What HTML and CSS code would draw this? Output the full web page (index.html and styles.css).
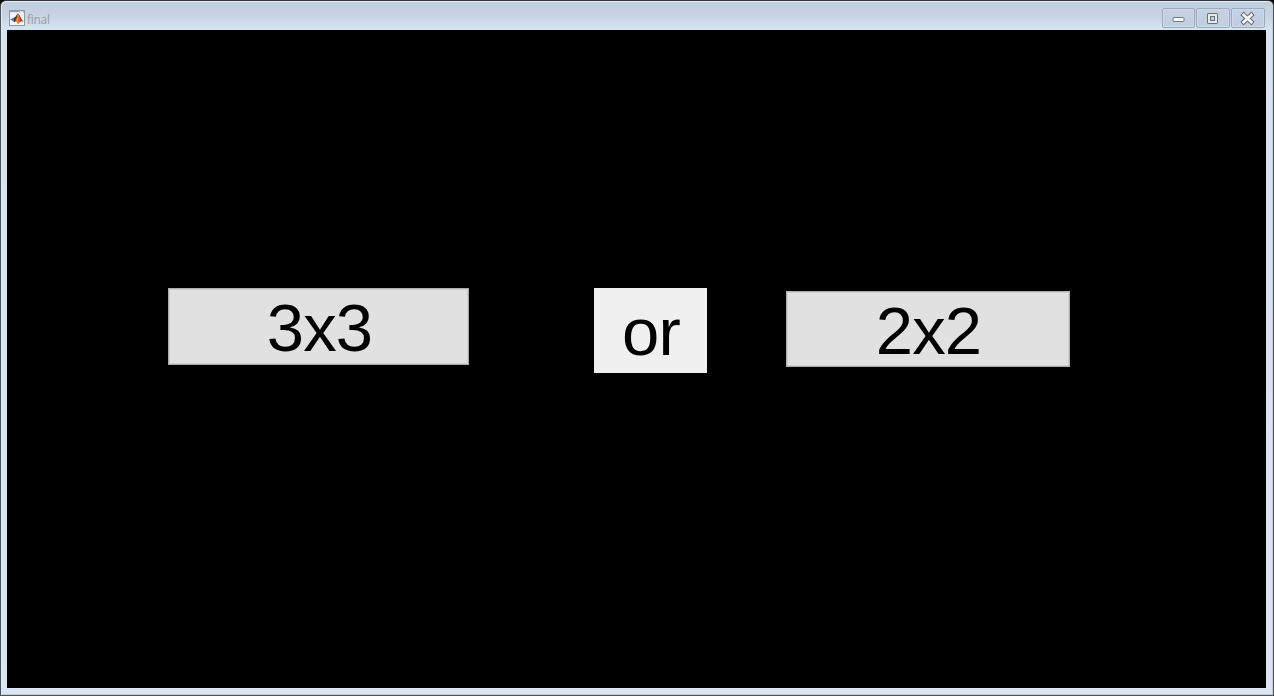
FILE: index.html
```html
<!DOCTYPE html>
<html lang="en">
<head>
<meta charset="utf-8">
<title>final</title>
<link rel="stylesheet" href="styles.css">
</head>
<body>
<div class="window">
  <header class="titlebar">
    <svg class="app-icon" width="16" height="16" viewBox="0 0 16 16">
      <rect x=".5" y=".5" width="15" height="15" fill="#f4f5f6" stroke="#8b98a8"/>
      <path d="M1 1.5h14" stroke="#8fa6c4" stroke-width="1.4"/>
      <path d="M11 1.5h3" stroke="#d5dfeb"/>
      <path d="M1 9.6 5 7.6 7 9.2 5 11.8Z" fill="#3d83b5"/>
      <path d="M5 7.6C7 7.4 7.5 4 9 3.2L8 8.6 5.8 12.2 5 11.8Z" fill="#4e3346"/>
      <path d="M9 3.2C10.8 4.5 11.8 9 14.5 11.8 12.5 10.6 11 12 9 14.2 8.3 12.4 7.2 11.5 5.8 12 7.7 9.8 8 5.5 9 3.2Z" fill="#e2602a"/>
      <path d="M9 4C9.7 6.5 9.4 10.5 8.5 12.6L7.2 11.4C8.7 9.1 8.7 6 9 4Z" fill="#f5a83c"/>
      <path d="M9.5 4C10.9 5.5 11.8 9 14.5 11.8 12.9 10.7 11.8 10.8 11 11.4 11.1 8.5 10.4 5.7 9.5 4Z" fill="#a8331f"/>
    </svg>
    <span class="title">final</span>
    <div class="controls">
      <button class="control" aria-label="Minimize">
        <svg width="13" height="11" viewBox="0 0 13 11"><rect x="1" y="4.5" width="11" height="4" rx="1" fill="#fff" stroke="#727985"/></svg>
      </button>
      <button class="control" aria-label="Maximize">
        <svg width="11" height="11" viewBox="0 0 11 11"><rect x=".5" y=".5" width="10" height="10" rx=".6" fill="#e6e9ed" stroke="#69707c"/><rect x="3.5" y="3.5" width="4" height="4" fill="#c1cfe0" stroke="#69707c"/></svg>
      </button>
      <button class="control" aria-label="Close">
        <svg width="13" height="11" viewBox="0 0 13 11"><path d="M2.7 2 10.3 9M10.3 2 2.7 9" stroke="#69707c" stroke-width="4.8" stroke-linecap="square" fill="none"/><path d="M2.7 2 10.3 9M10.3 2 2.7 9" stroke="#f7f8fa" stroke-width="2.7" stroke-linecap="square" fill="none"/></svg>
      </button>
    </div>
  </header>
  <main class="canvas">
    <button class="choice choice-three">3x3</button>
    <div class="label">or</div>
    <button class="choice choice-two">2x2</button>
  </main>
</div>
</body>
</html>
```
FILE: styles.css
```css
* { box-sizing: border-box; }
body { margin: 0; background: #000; overflow: hidden; }
.window {
  display: flex;
  flex-direction: column;
  width: 1274px;
  height: 696px;
  padding: 0 7px 7px 6px;
  border: 1px solid #4c5259;
  border-top-color: #2f3439;
  border-radius: 6px 6px 0 0;
  background: linear-gradient(#bfcddd 0, #c5d3e2 14px, #d6e3f1 28px, #d9e5f3 100%);
  box-shadow: inset 0 1px #e6edf5, inset 1px 0 #e1eaf3, inset -1px -1px #c5ced8;
}
.titlebar {
  display: flex;
  flex: none;
  height: 29px;
  padding-left: 2px;
}
.app-icon { margin-top: 9px; }
.title {
  margin: 11px 0 0 2px;
  font: 12px/16px "Open Sans", "Noto Sans", sans-serif;
  letter-spacing: -0.3px;
  color: #989ca1;
}
.controls { display: flex; gap: 1px; margin: 7px 1px 0 auto; }
.control {
  display: flex;
  align-items: center;
  justify-content: center;
  width: 34px;
  height: 20px;
  padding: 0 1px 0 0;
  border: 1px solid #9baabd;
  border-radius: 2px;
  background: linear-gradient(#c5d2e1, #c0cee0);
  box-shadow: inset 0 0 0 1px #cedae7;
}
.control:first-child { width: 33px; padding-right: 0; }
.control svg { display: block; overflow: visible; }
.canvas {
  display: flex;
  flex: 1;
  align-items: flex-start;
  padding: 258px 0 0 161px;
  background: #000;
}
.choice, .label {
  flex: none;
  font: 67px/74px "Liberation Sans", Arial, sans-serif;
  letter-spacing: -0.8px;
  text-align: center;
  color: #000;
}
.choice {
  padding: 0;
  border: 1px solid #adadad;
  border-radius: 0;
  background: #e1e1e1;
  box-shadow: inset 0 0 0 1px #d0d0d0;
}
.choice-three { width: 301px; height: 77px; padding: 2px 0 0 2px; }
.label { width: 113px; height: 85px; margin-left: 125px; padding: 7px 0 0 1px; background: #f0f0f0; }
.choice-two { width: 284px; height: 76px; margin: 3px 0 0 79px; padding: 2px 0 0 1px; }
```
